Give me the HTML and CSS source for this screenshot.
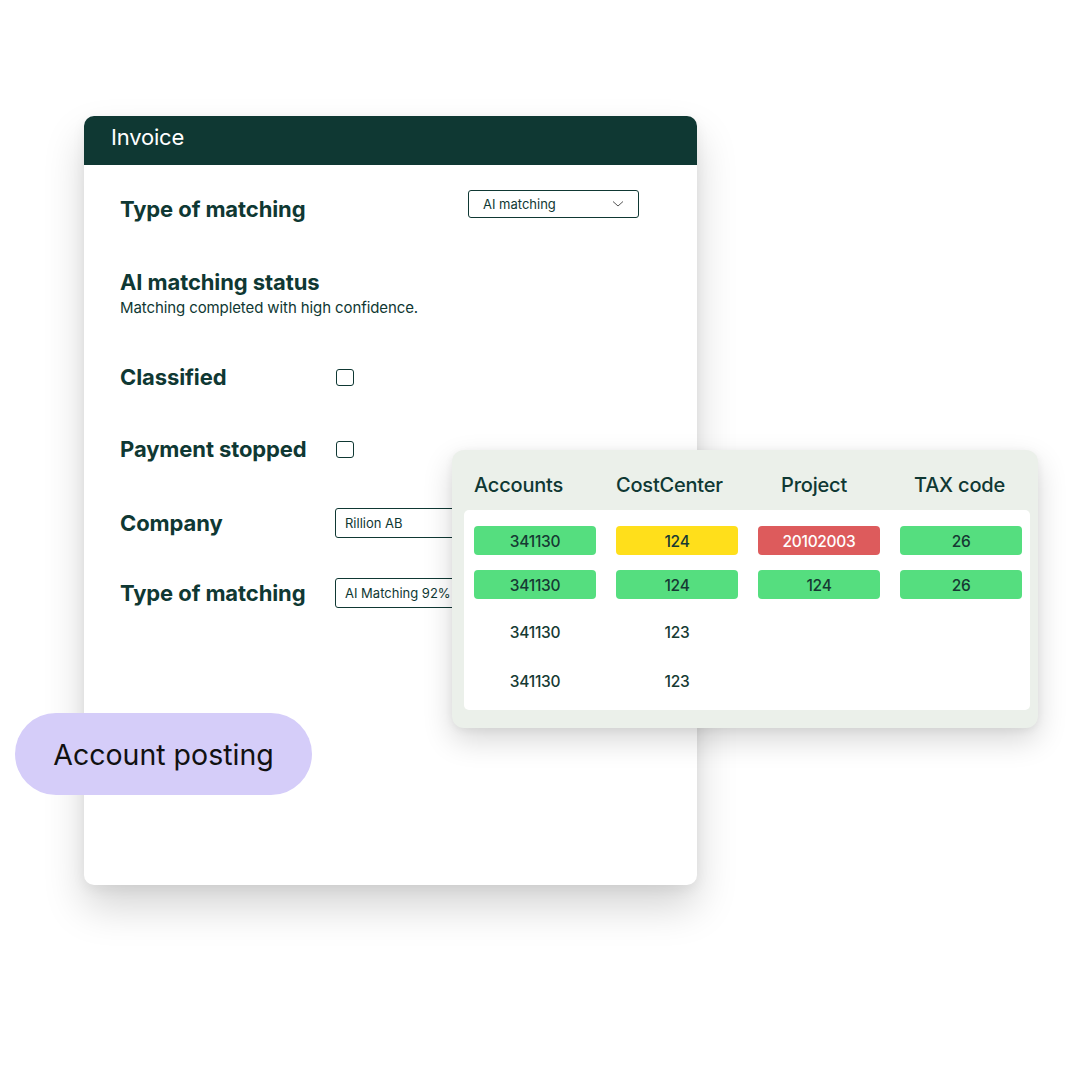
FILE: index.html
```html
<!DOCTYPE html>
<html>
<head>
<meta charset="utf-8">
<link rel="stylesheet" href="styles.css">
</head>
<body>
<div class="stage">
  <div class="card">
    <div class="card-head">Invoice</div>
    <div class="card-body">
      <div class="row row-top">
        <div class="label label-low">Type of matching</div>
        <div class="select">
          <span>AI matching</span>
          <svg class="chev" width="12" height="8" viewBox="0 0 12 8"><path d="M1 1.5 L6 6 L11 1.5" fill="none" stroke="#555" stroke-width="1"/></svg>
        </div>
      </div>
      <div class="status">
        <div class="label">AI matching status</div>
        <div class="sub">Matching completed with high confidence.</div>
      </div>
      <div class="row row-check1">
        <div class="label lw">Classified</div>
        <div class="check"></div>
      </div>
      <div class="row row-check2">
        <div class="label lw">Payment stopped</div>
        <div class="check"></div>
      </div>
      <div class="row row-in1">
        <div class="label lw">Company</div>
        <div class="input">Rillion AB</div>
      </div>
      <div class="row row-in2">
        <div class="label lw">Type of matching</div>
        <div class="input">AI Matching 92%</div>
      </div>
    </div>
  </div>

  <div class="panel">
    <div class="thead">
      <div class="th th1">Accounts</div>
      <div class="th th2">CostCenter</div>
      <div class="th th3">Project</div>
      <div class="th th4">TAX code</div>
    </div>
    <div class="tbody">
      <div class="trow r1">
        <div class="cell green">341130</div>
        <div class="cell yellow">124</div>
        <div class="cell red">20102003</div>
        <div class="cell green">26</div>
      </div>
      <div class="trow r2">
        <div class="cell green">341130</div>
        <div class="cell green">124</div>
        <div class="cell green">124</div>
        <div class="cell green">26</div>
      </div>
      <div class="trow r3">
        <div class="cell">341130</div>
        <div class="cell">123</div>
        <div class="cell"></div>
        <div class="cell"></div>
      </div>
      <div class="trow r4">
        <div class="cell">341130</div>
        <div class="cell">123</div>
        <div class="cell"></div>
        <div class="cell"></div>
      </div>
    </div>
  </div>

  <div class="tag">Account posting</div>
</div>
</body>
</html>
```

FILE: styles.css
```css
* { box-sizing: border-box; }
html, body { margin: 0; padding: 0; background: #fff; }
body { font-family: Inter, "Noto Sans", sans-serif; color: #0f3833; }
.stage { position: relative; width: 1080px; height: 1080px; overflow: hidden; background: #fff; }

.card {
  position: absolute; left: 84px; top: 116px; width: 613px; height: 769px;
  background: #fff; border-radius: 10px; overflow: hidden;
  box-shadow: 0 22px 40px rgba(0,0,0,0.17), 0 4px 14px rgba(0,0,0,0.06);
}
.card-head {
  height: 49px; background: #0f3833; color: #fff;
  font-size: 22px; font-weight: 400; padding-left: 27px; line-height: 42px;
  letter-spacing: -0.2px;
}
.card-body { padding: 0 58px 0 36px; display: flex; flex-direction: column; }
.row { display: flex; align-items: center; height: 30px; }
.label { font-size: 22px; font-weight: 700; letter-spacing: -0.1px; color: #0f3833; }
.label-low { padding-top: 11px; }
.lw { width: 216px; flex: none; }
.row-top { justify-content: space-between; margin-top: 24px; height: 29px; }
.select {
  width: 171px; height: 28px; border: 1px solid #0f3833; border-radius: 3px;
  display: flex; align-items: center; justify-content: space-between;
  padding: 0 14px 0 14px; font-size: 13px; font-weight: 400; color: #0f3833;
}
.chev { display: block; }
.status { margin-top: 51px; }
.status .label { line-height: 26px; }
.sub { font-size: 15px; line-height: 20px; margin-top: 3px; color: #0f3833; letter-spacing: -0.1px; }
.row-check1 { margin-top: 44px; }
.row-check2 { margin-top: 42px; }
.row-in1 { margin-top: 44px; }
.row-in2 { margin-top: 40px; }
.check { width: 18px; height: 17px; border: 1.5px solid #0f3833; border-radius: 3px; }
.input {
  width: 220px; height: 30px; border: 1px solid #0f3833; border-radius: 3px;
  font-size: 13px; padding-left: 9px; line-height: 28px; color: #0f3833; margin-left: -1px;
}

.panel {
  position: absolute; left: 452px; top: 450px; width: 586px; height: 278px;
  background: #ebf0ea; border-radius: 12px;
  padding: 0 8px 18px 12px; display: flex; flex-direction: column;
  box-shadow: 0 12px 30px rgba(0,0,0,0.16), 0 2px 8px rgba(0,0,0,0.06);
}
.thead { height: 60px; display: flex; align-items: center; padding-left: 10px; padding-top: 10px; }
.th { font-size: 20px; font-weight: 500; letter-spacing: -0.2px; color: #0f3833; }
.th1 { width: 142px; }
.th2 { width: 165px; }
.th3 { width: 133px; }
.tbody { flex: 1; background: #fff; border-radius: 5px; padding: 16px 8px 0 10px; }
.trow { display: grid; grid-template-columns: repeat(4, 122px); column-gap: 20px; height: 29px; }
.r2 { margin-top: 15px; }
.r3 { margin-top: 18px; }
.r4 { margin-top: 20px; }
.cell {
  height: 29px; border-radius: 4px; display: flex; align-items: center; justify-content: center;
  font-size: 15.5px; font-weight: 500; color: #163a33; letter-spacing: -0.3px; padding-top: 1px;
}
.green { background: #55de7f; }
.yellow { background: #ffdf1b; }
.red { background: #dd5b5c; color: #fff; }

.tag {
  position: absolute; left: 15px; top: 713px; width: 297px; height: 82px;
  border-radius: 41px; background: #d5cdf9; color: #111;
  display: flex; align-items: center; justify-content: center;
  font-size: 28.5px; font-weight: 400; letter-spacing: 0;
}
```
